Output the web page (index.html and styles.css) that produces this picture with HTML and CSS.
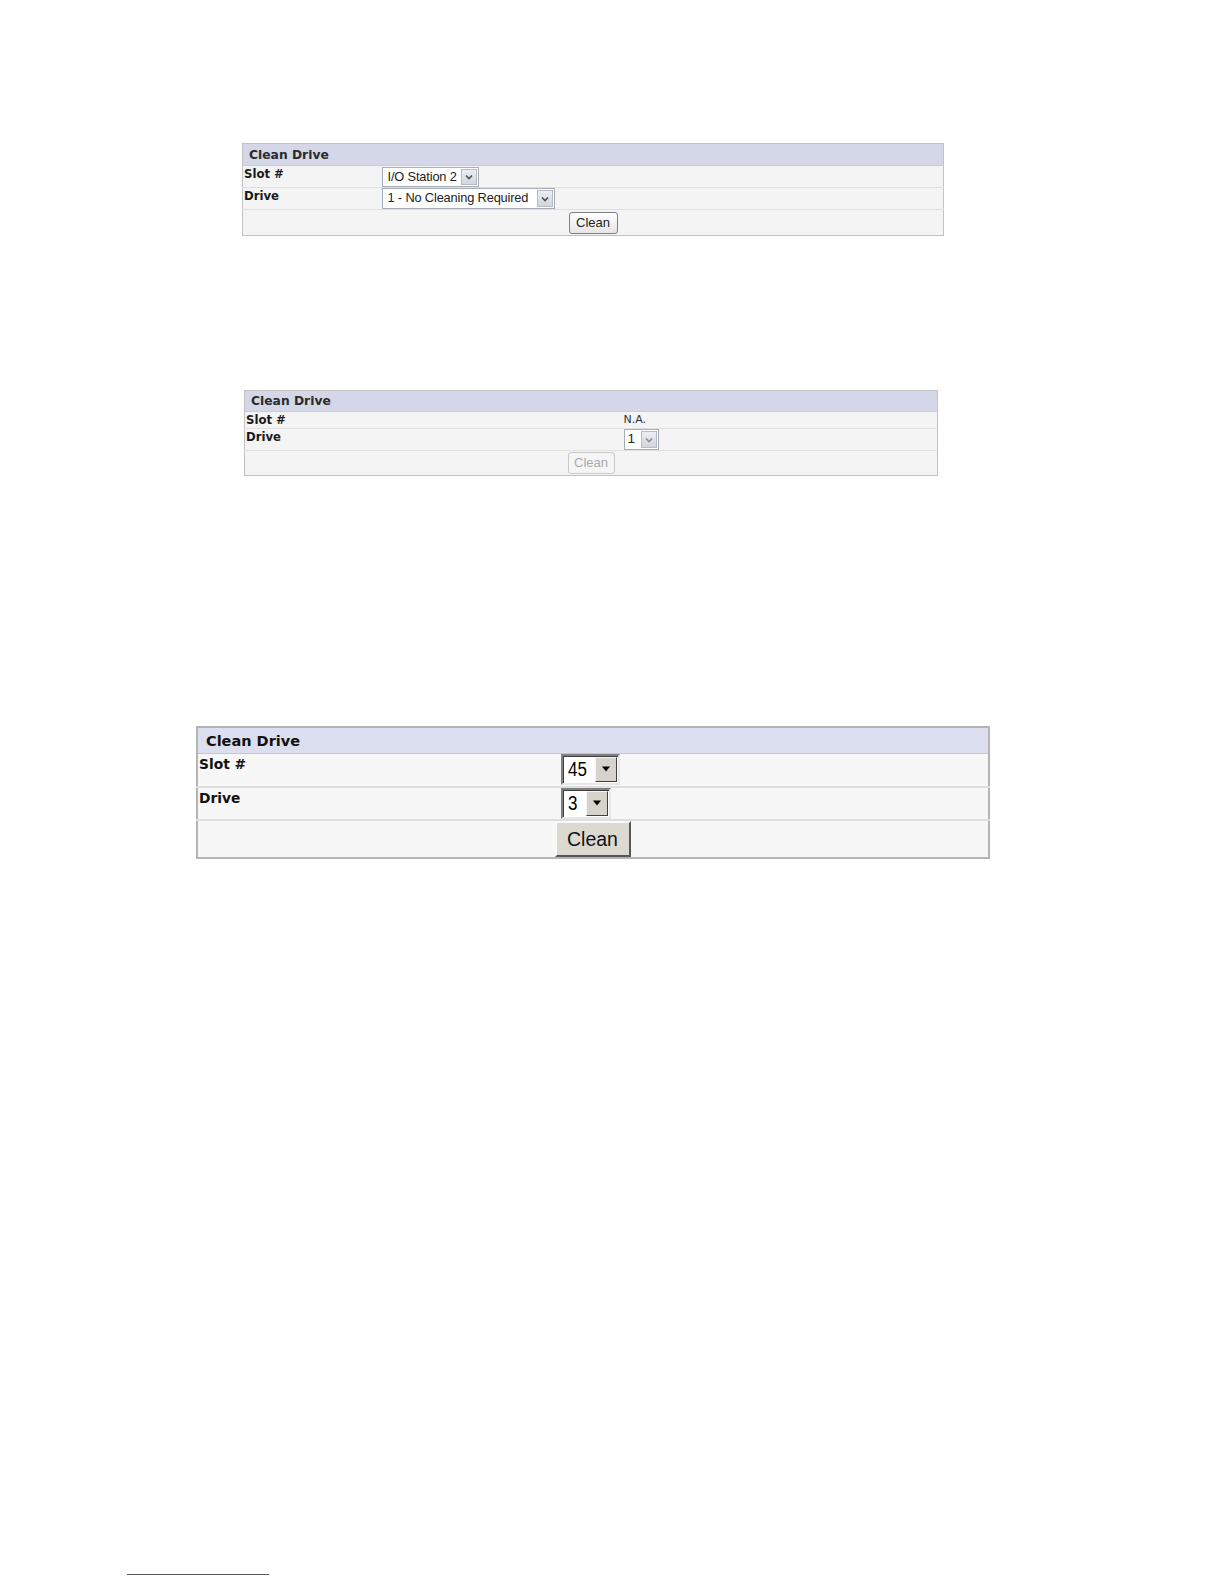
FILE: index.html
```html
<!DOCTYPE html>
<html>
<head>
<meta charset="utf-8">
<link rel="stylesheet" href="styles.css">
</head>
<body>
<div class="page">
  <table class="cd cd1">
    <colgroup><col class="c1"><col></colgroup>
    <tr class="hd"><th colspan="2">Clean Drive</th></tr>
    <tr class="r"><td class="lbl">Slot #</td><td class="val"><span class="sel w1"><span class="txt">I/O Station 2</span><span class="arr"><svg width="8" height="6" viewBox="0 0 8 6"><path d="M1 1.5 L4 4.5 L7 1.5" fill="none" stroke="#4a4f57" stroke-width="1.6"/></svg></span></span></td></tr>
    <tr class="r"><td class="lbl">Drive</td><td class="val"><span class="sel w2"><span class="txt">1 - No Cleaning Required</span><span class="arr"><svg width="8" height="6" viewBox="0 0 8 6"><path d="M1 1.5 L4 4.5 L7 1.5" fill="none" stroke="#4a4f57" stroke-width="1.6"/></svg></span></span></td></tr>
    <tr class="act"><td colspan="2"><span class="btn">Clean</span></td></tr>
  </table>

  <table class="cd cd2">
    <colgroup><col class="c1"><col></colgroup>
    <tr class="hd"><th colspan="2">Clean Drive</th></tr>
    <tr class="r rs"><td class="lbl">Slot #</td><td class="val na">N.A.</td></tr>
    <tr class="r"><td class="lbl">Drive</td><td class="val"><span class="sel w3"><span class="txt">1</span><span class="arr"><svg width="8" height="6" viewBox="0 0 8 6"><path d="M1 1.5 L4 4.5 L7 1.5" fill="none" stroke="#8a9099" stroke-width="1.6"/></svg></span></span></td></tr>
    <tr class="act"><td colspan="2"><span class="btn dis">Clean</span></td></tr>
  </table>

  <table class="cd cd3">
    <colgroup><col class="c1"><col></colgroup>
    <tr class="hd"><th colspan="2">Clean Drive</th></tr>
    <tr class="r r1"><td class="lbl">Slot #</td><td class="val"><span class="xsel w4"><span class="txt">45</span><span class="xarr"><svg width="10" height="6" viewBox="0 0 10 6"><path d="M1 0.5 H9 L5 5.5 Z" fill="#000"/></svg></span></span></td></tr>
    <tr class="r"><td class="lbl">Drive</td><td class="val"><span class="xsel w5"><span class="txt">3</span><span class="xarr"><svg width="10" height="6" viewBox="0 0 10 6"><path d="M1 0.5 H9 L5 5.5 Z" fill="#000"/></svg></span></span></td></tr>
    <tr class="act"><td colspan="2"><span class="xbtn">Clean</span></td></tr>
  </table>

  <div class="footrule"></div>
</div>
</body>
</html>
```
FILE: styles.css
```css
html, body { margin: 0; padding: 0; background: #fff; }
.page { padding-top: 143px; }

.cd { border-collapse: collapse; table-layout: fixed; }
.cd td, .cd th { padding: 0; }

/* table 1 and 2 */
.cd1 { width: 702px; margin-left: 242px; border: 1px solid #c2c2c2; }
.cd1 .c1 { width: 139px; }
.cd2 { width: 694px; margin-left: 244px; margin-top: 154px; border: 1px solid #c2c2c2; }
.cd2 .c1 { width: 379px; }

.cd1 .hd th, .cd2 .hd th {
  height: 21px; background: #d3d7e8; text-align: left;
  font: bold 12.3px "DejaVu Sans", sans-serif; color: #2b2b2b;
  padding-left: 6px; vertical-align: middle; border-bottom: 1px solid #c8ccd8;
}
.cd2 .hd th { height: 20px; }
.cd1 .r td, .cd2 .r td { background: #f4f4f4; border-bottom: 1px solid #e0e0e0; vertical-align: top; height: 21px; }
.cd2 .rs td { height: 15px; }
.cd1 .lbl, .cd2 .lbl { font: bold 11.7px "DejaVu Sans", sans-serif; color: #1a1a1a; padding-left: 1px; }
.cd1 .r .lbl, .cd2 .r .lbl { padding-top: 1px; height: 20px; }
.cd2 .rs .lbl { height: 14px; }
.cd1 .act td, .cd2 .act td { background: #f4f4f4; text-align: center; height: 24px; vertical-align: middle; }
.cd1 .act td { height: 25px; }
.na { font: 11px "DejaVu Sans", sans-serif; color: #333; padding-top: 1px !important; }

.sel {
  display: inline-flex; align-items: stretch; box-sizing: border-box;
  border: 1px solid #a7adb6; background: #fff;
  font: 12.8px "Liberation Sans", sans-serif; color: #222; letter-spacing: -0.15px;
  vertical-align: top;
}
.sel .txt { flex: 1; padding-left: 5px; line-height: 17px; white-space: nowrap; }
.sel .arr {
  width: 16px; margin: 1px; box-sizing: border-box; border: 1px solid #b5bbc4;
  background: linear-gradient(#eceef2, #d2d6dd); display: flex; align-items: center; justify-content: center;
}
.w1 { width: 97px; height: 20px; margin-top: 1px; }
.w2 { width: 173px; height: 21px; }
.w3 { width: 35px; height: 21px; }
.w3 .txt { padding-left: 3px; font-size: 13.5px; }

.btn {
  display: inline-block; box-sizing: border-box; width: 49px; height: 22px;
  border: 1px solid #7d8085; border-radius: 3px;
  background: linear-gradient(#ffffff, #e6e6e6);
  font: 13px "Liberation Sans", sans-serif; color: #222; line-height: 20px; text-align: center;
  vertical-align: middle;
}
.btn.dis { width: 47px; border-color: #c9c9c9; color: #ababab; background: #f5f5f5; }

/* table 3 */
.cd3 { width: 794px; margin-left: 196px; margin-top: 250px; border: 2px solid #b4b4b4; }
.cd3 .c1 { width: 363px; }
.cd3 .hd th {
  height: 26px; background: #dbdfef; text-align: left;
  font: bold 14.5px "DejaVu Sans", sans-serif; color: #111;
  padding-left: 8px; padding-top: 2px; box-sizing: border-box; vertical-align: middle;
  border-bottom: 1px solid #c4c8d6;
}
.cd3 .r td { background: #f7f7f7; border-bottom: 2px solid #dedede; height: 31px; vertical-align: top; }
.cd3 .r1 td { height: 32px; }
.cd3 .lbl { font: bold 13.8px "DejaVu Sans", sans-serif; color: #111; padding-left: 1px; padding-top: 2px; box-sizing: border-box; }
.cd3 .act td { background: #f7f7f7; height: 36px; text-align: center; vertical-align: top; }

.xsel {
  display: inline-flex; box-sizing: border-box; background: #fff; margin-left: 1px;
  border-style: solid; border-width: 2px;
  border-color: #7f7f7f #e8e8e8 #e8e8e8 #7f7f7f;
  box-shadow: inset 1px 1px 0 #404040;
  font: 20px "Liberation Sans", sans-serif; color: #000; vertical-align: top;
}
.xsel .txt { flex: 1; padding-left: 6px; line-height: 27px; transform: scaleX(0.85); transform-origin: left center; }
.xsel .xarr {
  width: 22px; margin: 1px 1px 1px 0; box-sizing: border-box; background: #d6d3cc;
  border-style: solid; border-width: 1px; border-color: #f4f4f4 #404040 #404040 #f4f4f4;
  display: flex; align-items: center; justify-content: center;
}
.w4 { width: 59px; height: 31px; }
.w5 { width: 50px; height: 31px; }

.xbtn {
  display: inline-block; box-sizing: border-box; width: 76px; height: 36px; margin-left: -1px;
  background: #dcd9d2; border-style: solid; border-width: 2px;
  border-color: #fafafa #555 #555 #fafafa;
  font: 19.5px "Liberation Sans", sans-serif; color: #111; line-height: 32px; text-align: center;
}

.footrule { width: 142px; height: 1px; background: #555; margin-left: 127px; margin-top: 715px; }
```
